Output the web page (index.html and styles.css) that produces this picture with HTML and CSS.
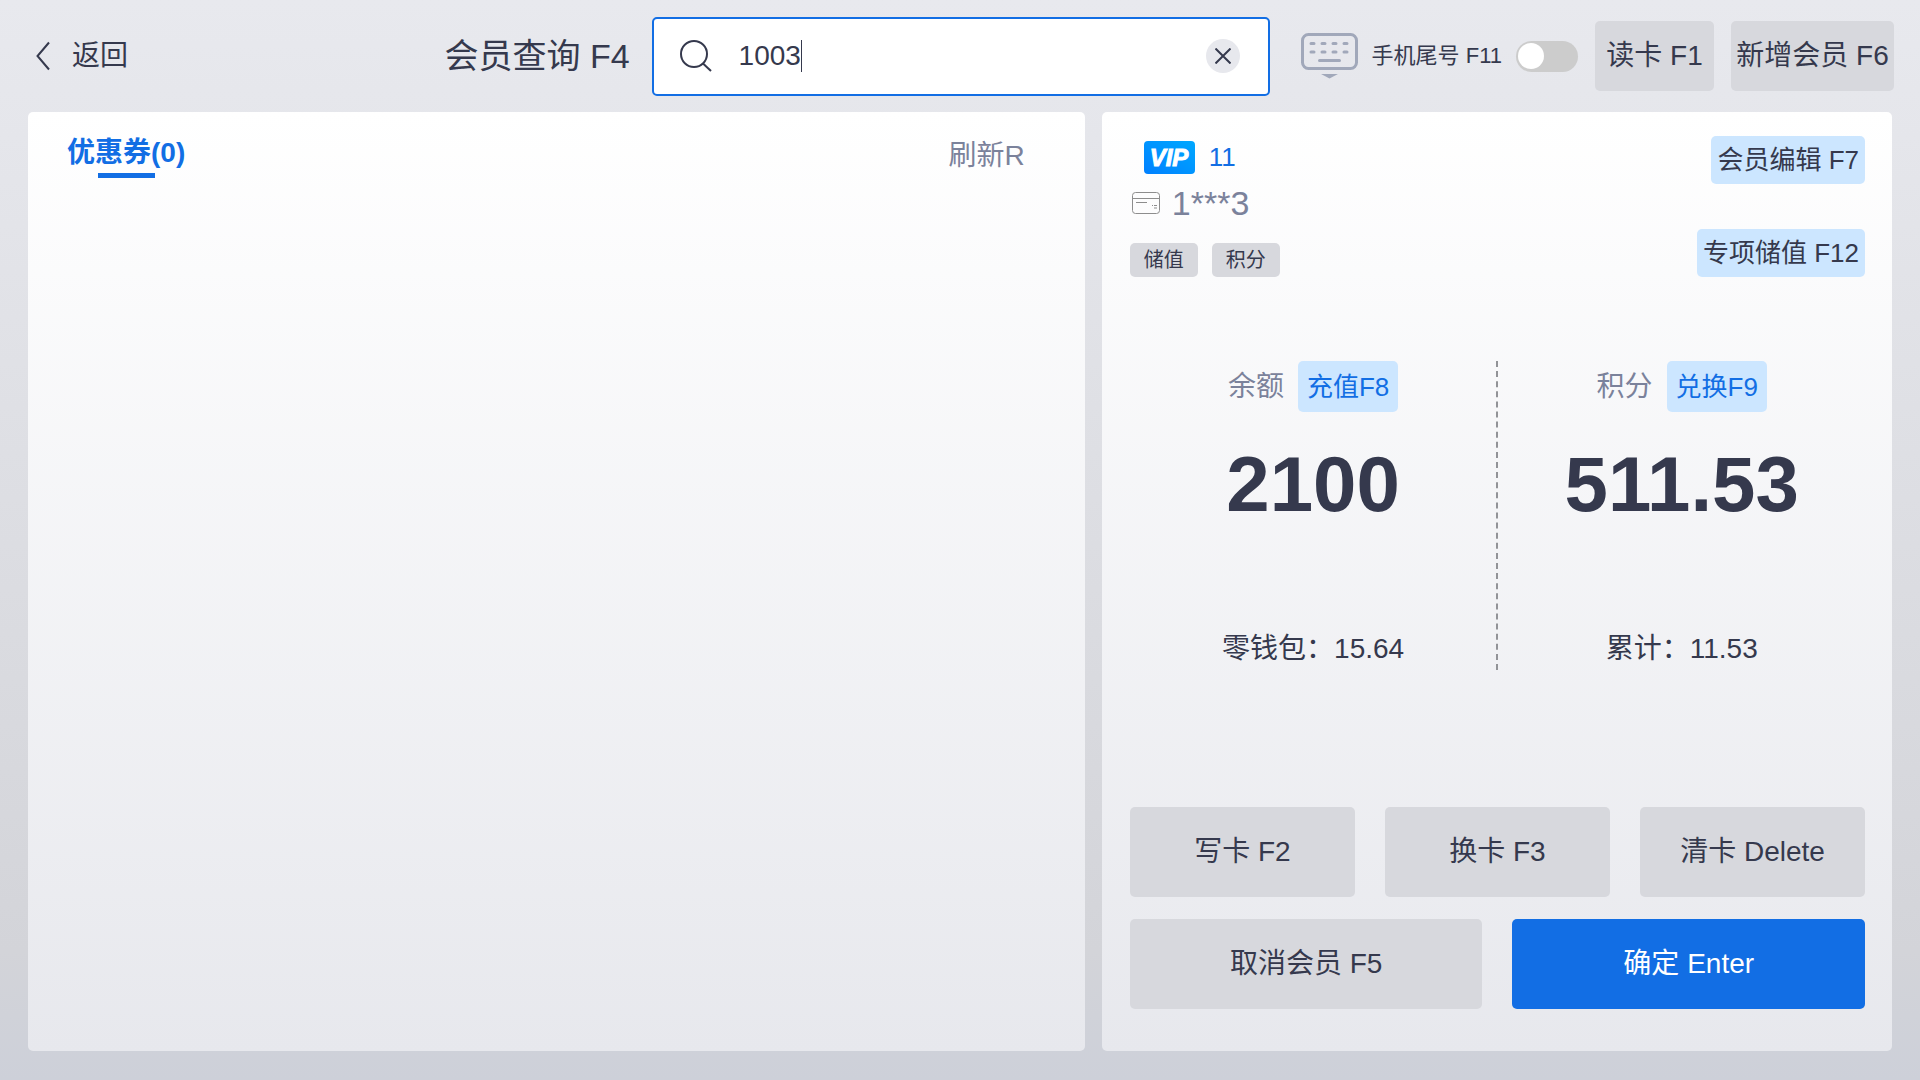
FILE: index.html
```
<!DOCTYPE html>
<html lang="zh-CN">
<head>
    <meta charset="UTF-8">
    <meta name="viewport" content="width=device-width, initial-scale=1.0">
    <title>会员查询</title>
    <link rel="stylesheet" href="styles.css">
</head>
<body>
    <div class="page">
        <header class="header">
            <a class="back" href="#">
                <svg width="14" height="30" viewBox="0 0 14 30"><path d="M13 1.5 1.5 15 13 28.5"/></svg>
                返回
            </a>
            <label class="title" for="keyword">会员查询 F4</label>
            <div class="search">
                <svg class="searchIcon" width="34" height="34" viewBox="0 0 34 34"><circle cx="15" cy="15" r="13"/><path d="M24 24.5 32 32"/></svg>
                <input type="text" id="keyword" value="1003">
                <span class="caret"></span>
                <button class="clear" type="button" aria-label="清空">
                    <svg width="16" height="16" viewBox="0 0 16 16"><path d="M0.5 0.5 15.5 15.5M15.5 0.5 0.5 15.5"/></svg>
                </button>
            </div>
            <svg class="keyboard" width="57" height="46" viewBox="0 0 57 46">
                <rect x="1.5" y="1.5" width="54" height="34" rx="6"/>
                <path d="M10 10.5h3M21 10.5h3M32 10.5h3M43 10.5h3M10 19h3M21 19h3M32 19h3M43 19h3M18.5 27.5h20"/>
                <polygon points="20,41 37,41 28.5,45.5"/>
            </svg>
            <label class="tail" for="tail">手机尾号 F11</label>
            <input class="switch" type="checkbox" id="tail">
            <button class="btn btnTop" type="button">读卡 F1</button>
            <button class="btn btnTop btnAdd" type="button">新增会员 F6</button>
        </header>

        <main class="main">
            <section class="panel coupon">
                <a class="tab" href="#">优惠券(0)</a>
                <a class="refresh" href="#">刷新R</a>
            </section>

            <section class="panel member">
                <div class="info">
                    <div class="user">
                        <div class="level">
                            <svg width="51" height="33" viewBox="0 0 51 33">
                                <defs>
                                    <linearGradient id="vipBg" x1="0" y1="1" x2="1" y2="0">
                                        <stop offset="0" stop-color="#0080ff"/>
                                        <stop offset="1" stop-color="#00a8ff"/>
                                    </linearGradient>
                                </defs>
                                <rect width="51" height="33" rx="4" fill="url(#vipBg)"/>
                                <text x="25" y="25" text-anchor="middle">VIP</text>
                            </svg>
                            <span>11</span>
                        </div>
                        <div class="card">
                            <svg width="28" height="22" viewBox="0 0 28 22"><rect x="0.5" y="0.5" width="27" height="21" rx="3"/><path d="M0.5 6.5h27M4 10.5h11M22 13.5h3M20 13.5h1M22 16h3"/></svg>
                            <span>1***3</span>
                        </div>
                        <div class="tags">
                            <span>储值</span>
                            <span>积分</span>
                        </div>
                    </div>
                    <div class="edit">
                        <button class="btn btnLight" type="button">会员编辑 F7</button>
                        <button class="btn btnLight" type="button">专项储值 F12</button>
                    </div>
                </div>

                <div class="account">
                    <div class="item">
                        <div class="name">余额<button class="btn btnLight btnBlue" type="button">充值F8</button></div>
                        <strong>2100</strong>
                        <p>零钱包：15.64</p>
                    </div>
                    <div class="line"></div>
                    <div class="item">
                        <div class="name">积分<button class="btn btnLight btnBlue" type="button">兑换F9</button></div>
                        <strong>511.53</strong>
                        <p>累计：11.53</p>
                    </div>
                </div>

                <div class="actions">
                    <div class="row">
                        <button class="btn" type="button">写卡 F2</button>
                        <button class="btn" type="button">换卡 F3</button>
                        <button class="btn" type="button">清卡 Delete</button>
                    </div>
                    <div class="row">
                        <button class="btn" type="button">取消会员 F5</button>
                        <button class="btn btnMain" type="button">确定 Enter</button>
                    </div>
                </div>
            </section>
        </main>
    </div>
</body>
</html>
```
FILE: styles.css
```
* {
    margin: 0;
    padding: 0;
    box-sizing: border-box;
}

body {
    font-family: "Liberation Sans", "Noto Sans CJK SC", sans-serif;
    font-size: 28px;
    line-height: 34px;
    color: #35394d;
}
a {
    color: inherit;
    text-decoration: none;
}
svg {
    flex: none;
    fill: none;
    stroke: #35394d;
    stroke-width: 2;
}
input,
button {
    font: inherit;
    color: inherit;
    border: none;
}

.page {
    min-height: 100vh;
    display: flex;
    flex-direction: column;
    padding: 0 28px 29px;
    background: linear-gradient(#e8e9ee, #d3d4d9 88%, #cdd0d9);
}

/* 顶部 */
.header {
    height: 112px;
    display: flex;
    align-items: center;
    margin-right: -2px;
    white-space: nowrap;
}
.back {
    display: flex;
    align-items: center;
    gap: 22px;
    padding-left: 8px;
    margin-right: auto;
}
.title {
    font-size: 34px;
    margin-right: 22px;
}
.search {
    flex: 0 1 618px;
    height: 79px;
    display: flex;
    align-items: center;
    padding: 0 28px 0 25px;
    margin-right: 31px;
    background: #fff;
    border: 2px solid #126ee4;
    border-radius: 5px;
}
.search input {
    field-sizing: content;
    margin-left: 26px;
    background: none;
    outline: none;
}
.caret {
    width: 1px;
    height: 32px;
    background: #35394d;
}
.clear {
    width: 34px;
    height: 34px;
    display: flex;
    align-items: center;
    justify-content: center;
    margin-left: auto;
    background: #e7e8ed;
    border-radius: 50%;
}
.keyboard {
    margin-right: 14px;
    stroke: #a1a8ba;
    stroke-width: 3;
    stroke-linecap: round;
}
.keyboard polygon {
    fill: #a1a8ba;
    stroke: none;
}
.tail {
    font-size: 22px;
    margin-right: 14px;
}
.switch {
    appearance: none;
    width: 62px;
    height: 31px;
    padding: 2px;
    background: #ccc;
    border-radius: 16px;
}
.switch::before {
    content: "";
    display: block;
    width: 26px;
    height: 26px;
    background: #fff;
    border-radius: 50%;
}
.switch:checked::before {
    margin-left: auto;
}

.btn {
    background: #d7d8dd;
    border-radius: 5px;
    cursor: pointer;
    white-space: nowrap;
}
.btnTop {
    width: 119px;
    height: 70px;
    margin-left: 17px;
}
.btnAdd {
    width: 163px;
}
.btnLight {
    height: 48px;
    padding: 0 6px;
    font-size: 26px;
    background: #cce6ff;
}
.btnBlue {
    height: 51px;
    padding: 0 9px;
    color: #126ee4;
}
.btnMain {
    color: #fff;
    background: #126ee4;
}

/* 内容 */
.main {
    flex: 1;
    display: grid;
    grid-template-columns: 107fr 80fr;
    gap: 17px;
}
.panel {
    background: linear-gradient(#fff, #e7e8ed);
    border-radius: 5px;
}
.coupon {
    display: flex;
    justify-content: space-between;
    align-items: flex-start;
    padding: 24px 60px 0 39px;
}
.tab {
    font-weight: bold;
    color: #126ee4;
}
.tab::after {
    content: "";
    display: block;
    width: 57px;
    height: 5px;
    margin: 3px auto 0;
    background: #126ee4;
}
.refresh {
    padding-top: 3px;
    color: #7b829b;
}

.member {
    display: flex;
    flex-direction: column;
    padding: 24px 27px 42px 28px;
}
.info {
    height: 225px;
    display: flex;
    justify-content: space-between;
}
.level {
    display: flex;
    align-items: center;
    gap: 14px;
    padding: 5px 0 0 14px;
    font-size: 26px;
    line-height: 33px;
    color: #126ee4;
}
.level svg {
    stroke: none;
}
.level text {
    fill: #fff;
    stroke: #fff;
    stroke-width: 1;
    font-size: 24px;
    font-weight: bold;
    font-style: italic;
}
.card {
    display: flex;
    align-items: center;
    gap: 12px;
    padding: 12px 0 0 2px;
    font-size: 34px;
    color: #7b829b;
}
.card svg {
    stroke: #8d8d8d;
    stroke-width: 1;
}
.tags {
    display: flex;
    gap: 14px;
    margin-top: 23px;
    font-size: 20px;
}
.tags span {
    padding: 0 14px;
    background: #d7d8dd;
    border-radius: 5px;
}
.edit {
    display: flex;
    flex-direction: column;
    align-items: flex-end;
    gap: 45px;
}

.account {
    display: flex;
    height: 309px;
}
.item {
    flex: 1;
    display: flex;
    flex-direction: column;
    align-items: center;
}
.name {
    display: flex;
    align-items: center;
    gap: 14px;
    color: #7b829b;
}
.item strong {
    margin-top: 26px;
    font-size: 78px;
    line-height: 92px;
    font-weight: bold;
}
.item p {
    margin-top: auto;
    margin-bottom: 4px;
}
.line {
    border-left: 2px dashed #929397;
}

.actions {
    margin-top: auto;
}
.row {
    display: flex;
    gap: 30px;
    margin-top: 22px;
}
.row .btn {
    flex: 1;
    height: 90px;
}
```
